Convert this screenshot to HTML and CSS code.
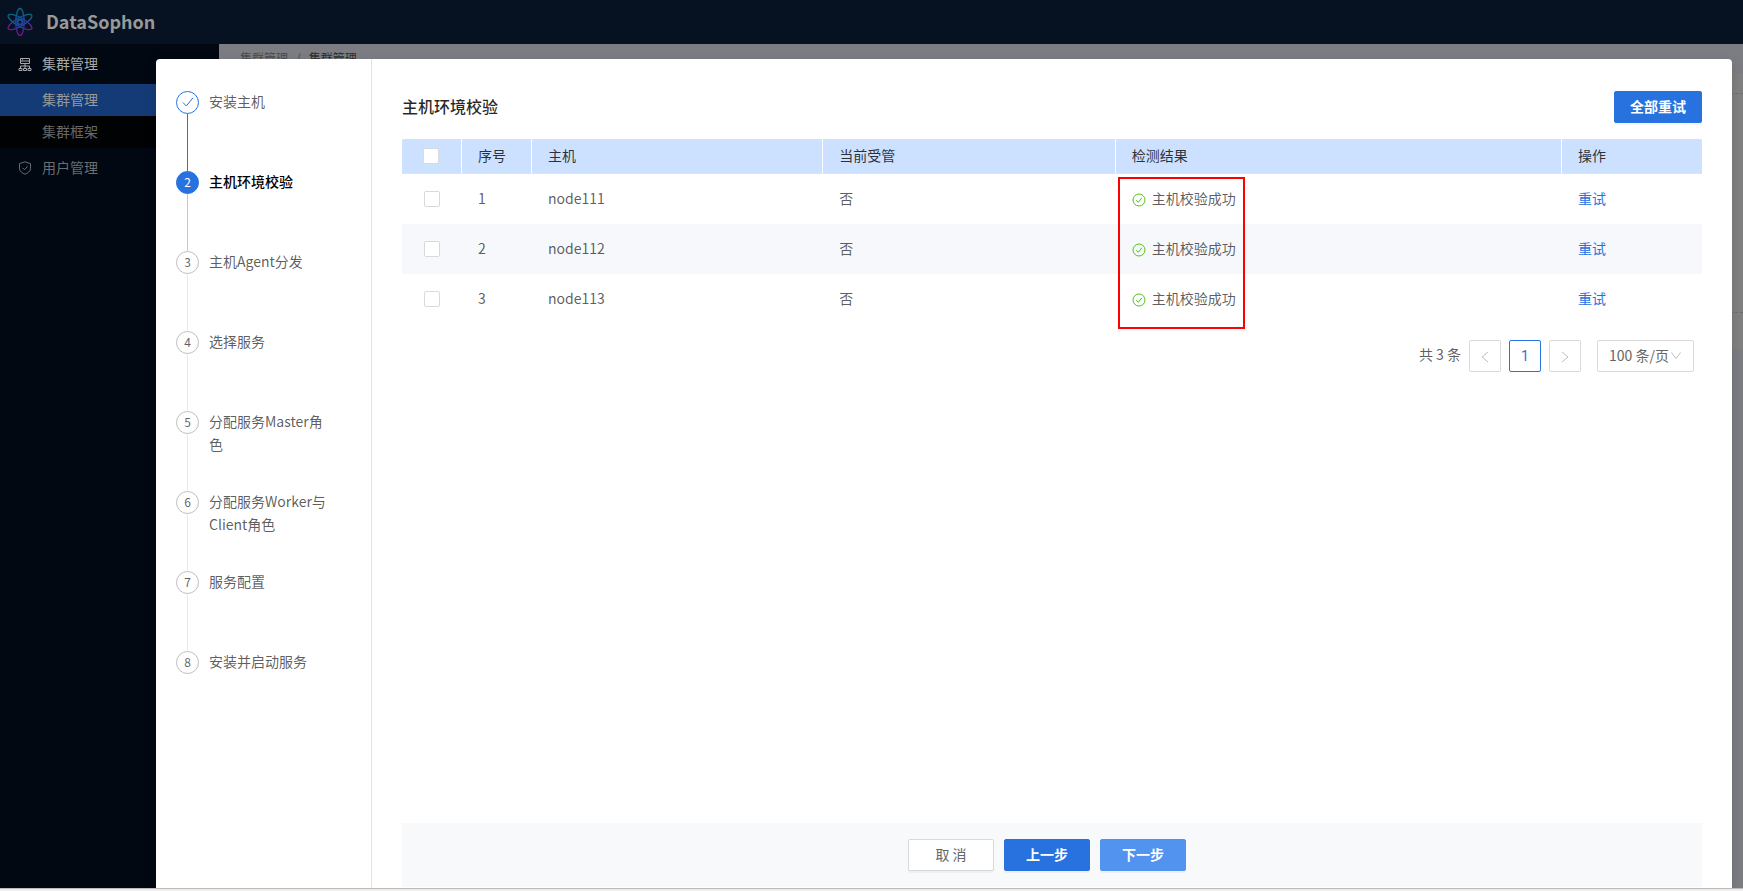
FILE: index.html
```html
<!DOCTYPE html>
<html lang="zh-CN">
<head>
<meta charset="utf-8">
<title>DataSophon</title>
<link rel="stylesheet" href="styles.css">
</head>
<body>
<div class="app">
  <header class="topbar">
    <svg class="logo" viewBox="0 0 30 30" aria-hidden="true">
      <defs>
        <linearGradient id="atom" gradientUnits="userSpaceOnUse" x1="12" y1="1" x2="18" y2="29">
          <stop offset="0" stop-color="#0a6e7c"/>
          <stop offset="0.5" stop-color="#14509a"/>
          <stop offset="0.75" stop-color="#3d2c94"/>
          <stop offset="1" stop-color="#85108f"/>
        </linearGradient>
      </defs>
      <g fill="none" stroke="url(#atom)" stroke-width="1.3">
        <ellipse cx="15" cy="16" rx="4.2" ry="13.500"/>
        <ellipse cx="15" cy="16" rx="4.2" ry="13.500" transform="rotate(60 15 16)"/>
        <ellipse cx="15" cy="16" rx="4.2" ry="13.500" transform="rotate(-60 15 16)"/>
        <circle cx="15" cy="16" r="2.500" stroke-width="2"/>
      </g>
    </svg>
    <span class="brand">DataSophon</span>
  </header>
  <div class="body">
    <nav class="sidebar">
      <a class="item item-open" href="#">
        <svg class="icon" viewBox="0 0 14 14" aria-hidden="true"><path d="M2.500 1.500h9v5h-9zM2.500 4h9M4 2.800h1M7 6.500v5M2.500 11.500V9h9v2.500M1 13.500v-2h3v2zM5.500 13.500v-2h3v2zM10 13.500v-2h3v2z"/></svg>
        <span class="label">集群管理</span></a>
      <div class="sub">
        <a class="subitem subitem-active" href="#">集群管理</a>
        <a class="subitem" href="#">集群框架</a>
      </div>
      <a class="item" href="#">
        <svg class="icon" viewBox="0 0 14 14" aria-hidden="true"><path d="M7 .8 12.500 2.600v5.200c0 2.400-3 4.300-5.500 5.500C4.500 12.100 1.500 10.200 1.500 7.800V2.600zM4.500 6.800 6.500 8.800 9.600 5.200"/></svg>
        <span class="label">用户管理</span></a>
    </nav>
    <main class="page">
      <div class="crumbs"><span>集群管理</span><span>/</span><span class="crumb-current">集群管理</span></div>
      <div class="panel"><div class="panel-list"></div></div>
    </main>
  </div>
  <div class="statusbar"></div>

  <div class="mask">
    <section class="modal" role="dialog" aria-label="主机环境校验">
      <ol class="steps">
        <li class="step step-done"><span class="dot"><svg class="tick" viewBox="0 0 12 12" aria-hidden="true"><path d="M1 6.500 4.300 10 11 1.800"/></svg></span><span class="step-title">安装主机</span></li>
        <li class="step step-current"><span class="dot">2</span><span class="step-title">主机环境校验</span></li>
        <li class="step"><span class="dot">3</span><span class="step-title">主机Agent分发</span></li>
        <li class="step"><span class="dot">4</span><span class="step-title">选择服务</span></li>
        <li class="step"><span class="dot">5</span><span class="step-title">分配服务Master角色</span></li>
        <li class="step"><span class="dot">6</span><span class="step-title">分配服务Worker与Client角色</span></li>
        <li class="step"><span class="dot">7</span><span class="step-title">服务配置</span></li>
        <li class="step"><span class="dot">8</span><span class="step-title">安装并启动服务</span></li>
      </ol>
      <div class="content">
        <div class="head">
          <h1 class="title">主机环境校验</h1>
          <button class="btn btn-primary btn-retry" type="button">全部重试</button>
        </div>
        <div class="table-wrap">
          <table class="hosts">
            <colgroup><col class="c-check"><col class="c-no"><col class="c-host"><col class="c-managed"><col class="c-result"><col class="c-action"></colgroup>
            <thead>
              <tr><th class="check"><input type="checkbox" aria-label="全选"></th><th>序号</th><th>主机</th><th>当前受管</th><th>检测结果</th><th>操作</th></tr>
            </thead>
            <tbody>
              <tr><td class="check"><input type="checkbox" aria-label="node111"></td><td>1</td><td>node111</td><td>否</td><td><span class="result result-marked"><svg class="ok" viewBox="0 0 14 14" aria-hidden="true"><circle cx="7" cy="7" r="6"/><path d="M4.200 7.200 6.300 9.300 9.900 4.800"/></svg>主机校验成功</span></td><td><a class="link" href="#">重试</a></td></tr>
              <tr><td class="check"><input type="checkbox" aria-label="node112"></td><td>2</td><td>node112</td><td>否</td><td><span class="result"><svg class="ok" viewBox="0 0 14 14" aria-hidden="true"><circle cx="7" cy="7" r="6"/><path d="M4.200 7.200 6.300 9.300 9.900 4.800"/></svg>主机校验成功</span></td><td><a class="link" href="#">重试</a></td></tr>
              <tr><td class="check"><input type="checkbox" aria-label="node113"></td><td>3</td><td>node113</td><td>否</td><td><span class="result"><svg class="ok" viewBox="0 0 14 14" aria-hidden="true"><circle cx="7" cy="7" r="6"/><path d="M4.200 7.200 6.300 9.300 9.900 4.800"/></svg>主机校验成功</span></td><td><a class="link" href="#">重试</a></td></tr>
            </tbody>
          </table>
        </div>
        <div class="pager">
          <span class="total">共 3 条</span>
          <button class="page-btn" type="button" aria-label="上一页"><svg class="chev" viewBox="0 0 12 12" aria-hidden="true"><path d="M9 2 3 7l6 5"/></svg></button>
          <button class="page-btn page-active" type="button">1</button>
          <button class="page-btn" type="button" aria-label="下一页"><svg class="chev" viewBox="0 0 12 12" aria-hidden="true"><path d="M3 2 9 7l-6 5"/></svg></button>
          <span class="size">
            <select class="size-select" aria-label="每页条数"><option>100 条/页</option></select>
            <svg class="size-arrow" viewBox="0 0 12 12" aria-hidden="true"><path d="M1.500 2.500 6 8.500l4.500-6"/></svg>
          </span>
        </div>
        <footer class="actions">
          <button class="btn btn-default" type="button">取 消</button>
          <button class="btn btn-primary" type="button">上一步</button>
          <button class="btn btn-primary btn-light" type="button">下一步</button>
        </footer>
      </div>
    </section>
  </div>
</div>
</body>
</html>
```
FILE: styles.css
```css
*, *::before, *::after { box-sizing: border-box; }

body {
  margin: 0;
  font-family: "Noto Sans CJK SC", "Noto Sans", sans-serif;
  font-size: 14px;
  line-height: 22px;
  color: rgba(0, 0, 0, .65);
}

a { text-decoration: none; }
button, select, input { font: inherit; margin: 0; }

.app {
  position: relative;
  display: flex;
  flex-direction: column;
  height: 100vh;
  overflow: hidden;
}

.topbar {
  display: flex;
  align-items: center;
  gap: 11px;
  flex: none;
  height: 44px;
  padding: 0 5px 3px;
  background: #061121;
}
.logo { width: 30px; height: 30px; }
.brand { font-size: 18px; font-weight: 700; color: #999; }

.body { display: flex; flex: 1; min-height: 0; }

.sidebar { flex: none; width: 219px; background: #010812; }
.item {
  display: flex;
  align-items: center;
  gap: 10px;
  height: 40px;
  padding-left: 18px;
  color: #6a6e73;
}
.item-open { color: #aaa; }
.label { padding-bottom: 2px; }
.icon { width: 14px; height: 14px; fill: none; stroke: currentColor; stroke-width: 1; }
.sub { background: #010204; }
.subitem { display: block; padding: 4px 0 6px 42px; color: #686868; }
.subitem-active { background: #153b77; color: #999; }

.page { flex: 1; background: #7b7d83; }
.crumbs { display: flex; gap: 8px; padding: 3px 21px 4px; font-size: 12px; color: #4b4c4e; }
.crumb-current { color: #2c2d2e; }
.panel { height: 276px; padding-top: 20px; background: #808080; }
.panel-list { height: 220px; border-top: 1px dashed #6f6f70; border-bottom: 1px dashed #6f6f70; }

.statusbar { flex: none; height: 3px; background: #f0eeec; border-top: 1px solid #bdbbba; }

.mask {
  position: absolute;
  inset: 0 0 3px;
  display: flex;
  padding: 59px 11px 0 156px;
  overflow: hidden;
}
.modal {
  display: flex;
  flex: 1;
  background: #fff;
  border-radius: 4px 4px 0 0;
  box-shadow: 0 4px 12px rgba(0, 0, 0, .15);
}

.steps {
  flex: none;
  width: 216px;
  margin: 0;
  padding: 32px 20px;
  list-style: none;
  border-right: 1px solid #e3e3e3;
}
.step { position: relative; display: flex; gap: 10px; height: 80px; }
.step::after {
  content: "";
  position: absolute;
  top: 23px;
  bottom: 0;
  left: 11px;
  width: 1px;
  background: #e8e8e8;
}
.step:last-child::after { display: none; }
.step-done::after { background: #2872e0; }
.step-current::after { background: #c8c8c8; }
.dot {
  display: flex;
  align-items: center;
  justify-content: center;
  flex: none;
  width: 23px;
  height: 23px;
  padding-bottom: 1px;
  border: 1px solid #bfbfbf;
  border-radius: 50%;
  font-size: 12px;
}
.step-done .dot { border-color: #2872e0; }
.step-current .dot { border-color: #2872e0; background: #2872e0; color: #fff; }
.tick { width: 12px; height: 12px; fill: none; stroke: #2872e0; stroke-width: 1; }
.step-title { width: 122px; margin-top: -1px; line-height: 23px; }
.step-current .step-title { font-weight: 500; color: #000; }

.content {
  display: flex;
  flex-direction: column;
  flex: 1;
  min-width: 0;
  padding: 32px 30px 1px;
}
.head { display: flex; align-items: center; justify-content: space-between; }
.title { margin: 0; padding-bottom: 2px; font-size: 16px; font-weight: 500; color: rgba(0, 0, 0, .85); }

.btn {
  width: 86px;
  height: 32px;
  padding: 0 0 2px;
  border: 1px solid #d9d9d9;
  border-radius: 2px;
  background: #fff;
  color: #666;
  box-shadow: 0 2px 0 rgba(0, 0, 0, .04);
}
.btn-primary { border-color: #2872e0; background: #2872e0; color: #fff; font-weight: 700; }
.btn-light { border-color: #5193ee; background: #5193ee; }
.btn-retry { width: 88px; }

.table-wrap { margin-top: 16px; }
.hosts { width: 100%; table-layout: fixed; border-collapse: separate; border-spacing: 0; }
.c-check { width: 60px; }
.c-no { width: 70px; }
.c-host { width: 22.4%; }
.c-managed { width: 22.5%; }
.c-action { width: 140px; }
.hosts th {
  height: 35px;
  padding: 0 16px 2px;
  background: #cce0ff;
  border-right: 1px solid #fff;
  border-bottom: 1px solid #e2e4e8;
  font-weight: 400;
  text-align: left;
  color: rgba(0, 0, 0, .8);
}
.hosts th:first-child { border-top-left-radius: 2px; }
.hosts th:last-child { border-right: 0; border-top-right-radius: 2px; }
.hosts td { height: 50px; padding: 0 16px 2px; }
.hosts tbody tr:nth-child(even) { background: #f6f8fc; }
.hosts .check { padding: 0; text-align: center; }
.hosts th.check { padding-right: 1px; }
.hosts input {
  appearance: none;
  display: block;
  width: 16px;
  height: 16px;
  margin: 0 auto;
  border: 1px solid #d9d9d9;
  border-radius: 2px;
  background: #fff;
}
.result { position: relative; display: flex; align-items: center; gap: 6px; }
.result-marked::after {
  content: "";
  position: absolute;
  top: -10px;
  left: -14px;
  width: 127px;
  height: 152px;
  border: 2px solid #f00;
}
.ok { width: 14px; height: 14px; margin-top: 3px; fill: none; stroke: #52c41a; stroke-width: 1; }
.link { color: #2872e0; }

.pager { display: flex; align-items: center; justify-content: flex-end; gap: 8px; padding: 16px 8px; }
.total { line-height: 28px; align-self: flex-start; }
.page-btn {
  display: flex;
  align-items: center;
  justify-content: center;
  width: 32px;
  height: 32px;
  padding: 0;
  border: 1px solid #d9d9d9;
  border-radius: 2px;
  background: #fff;
}
.page-active { border-color: #2872e0; color: #2872e0; font-family: Roboto, sans-serif; }
.chev { width: 12px; height: 12px; fill: none; stroke: #bfbfbf; overflow: visible; }
.size { position: relative; margin-left: 8px; }
.size-select {
  appearance: none;
  display: block;
  width: 97px;
  height: 32px;
  padding: 0 11px 2px;
  border: 1px solid #d9d9d9;
  border-radius: 2px;
  background: #fff;
  color: #666;
}
.size-arrow {
  position: absolute;
  top: 10px;
  right: 12px;
  width: 12px;
  height: 12px;
  fill: none;
  stroke: #bfbfbf;
  pointer-events: none;
}

.actions {
  display: flex;
  justify-content: center;
  gap: 10px;
  margin-top: auto;
  padding: 16px 10px 16px 0;
  background: #f7f9fb;
}
```
